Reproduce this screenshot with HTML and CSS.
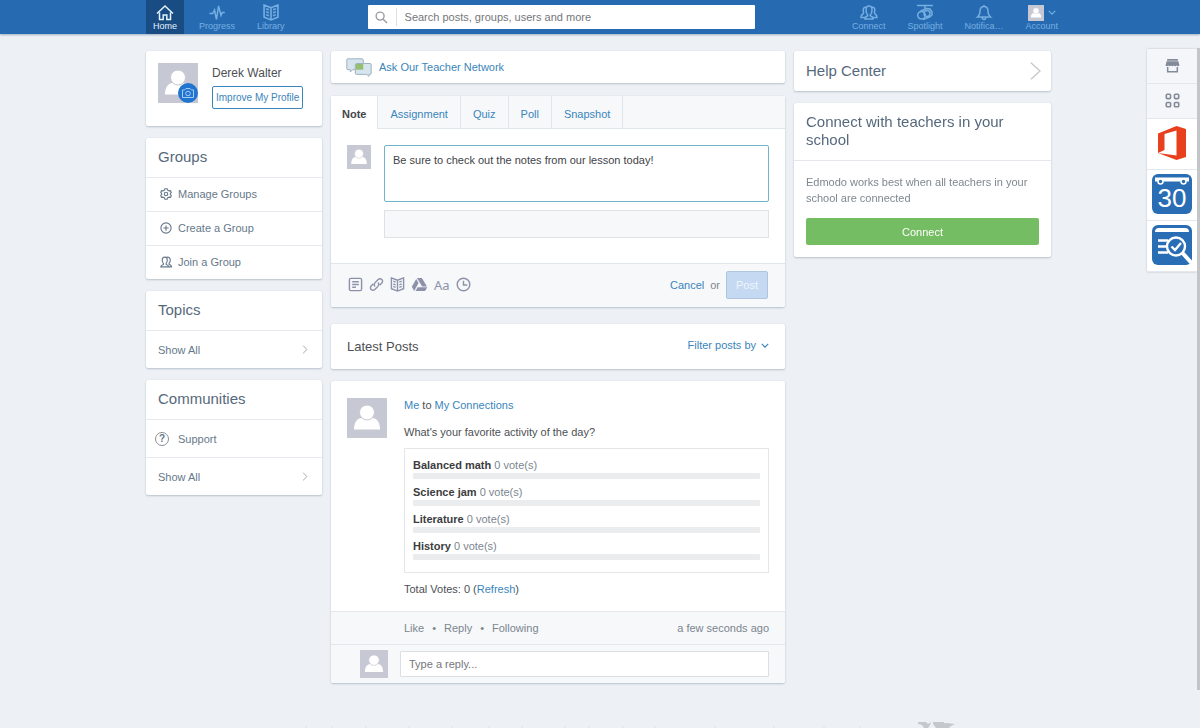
FILE: index.html
```
<!DOCTYPE html>
<html lang="en">
<head>
<meta charset="utf-8">
<title>Edmodo | Home</title>
<link rel="stylesheet" href="styles.css">
</head>
<body>
<svg class="defs" width="0" height="0" aria-hidden="true">
  <symbol id="person" viewBox="0 0 40 40"><rect width="40" height="40" fill="#c6c8d3"/><path d="M7 31.500c0-7 3-11.500 8-11.500h10c5 0 8 4.500 8 11.500z" fill="#fff"/><circle cx="20" cy="14.500" r="7.500" fill="#fff" stroke="#c6c8d3"/></symbol>
  <symbol id="book" viewBox="0 0 16 16"><path d="M8 3.500 1.500 1v11.500L8 15l6.500-2.500V1zM8 3.500V15M3.500 4.500 6 5.500M3.500 7.300 6 8.300M3.500 10 6 11M12.500 4.500 10 5.500M12.500 7.300 10 8.300M12.500 10 10 11"/></symbol>
  <symbol id="people" viewBox="0 0 18 16"><path d="M2 14.500c0-2 1.500-2.500 3.500-3.200v-1.500C4 8.500 4 7 4 5.500 4 3 5.200 1.500 7.300 1.500S10.700 3 10.700 5.500c0 1.500 0 3-1.500 4.300v1.500c2 .7 3.500 1.200 3.500 3.200zM9.500 1.800c2.800-1 5.200.4 5.200 3.700 0 1.600-.4 3.200-1.600 4.200v1.400c2 .7 3.400 1.400 3.400 3.400h-3.800"/></symbol>
  <symbol id="right" viewBox="0 0 8 14"><path d="m1 1 6 6-6 6"/></symbol>
  <symbol id="down" viewBox="0 0 10 6"><path d="m1 1 4 4 4-4"/></symbol>
</svg>

<header class="topbar">
  <div class="topbar-inner">
    <nav class="nav" aria-label="Main">
      <a class="nav-item active" href="#"><svg class="line" viewBox="0 0 18 16"><path d="m1 9 8-7.500L17 9M3.500 8v7h3.700v-4.500h3.600V15h3.700V8"/></svg><span>Home</span></a>
      <a class="nav-item" href="#"><svg class="line" viewBox="0 0 18 16"><path d="M1.500 9h3.200L6.500 5.500 8.500 15l2-13.500L13 11l1.300-3h2.500"/></svg><span>Progress</span></a>
      <a class="nav-item" href="#"><svg class="line"><use href="#book"/></svg><span>Library</span></a>
    </nav>
    <form class="search">
      <button class="search-btn" type="button" aria-label="Search"><svg class="line" viewBox="0 0 14 14"><circle cx="5.500" cy="5.500" r="4.300"/><path d="m8.500 8.500 4.500 4.500"/></svg></button>
      <input type="search" aria-label="Search" placeholder="Search posts, groups, users and more">
    </form>
    <nav class="nav nav-right" aria-label="Personal">
      <a class="nav-item" href="#"><svg class="line" viewBox="0 0 18 16"><path d="M6.500 2.500C2.500 2.500 3 6 3.600 8c.2 1-.3 1.400-1.300 2C1 10.800 1 12 1 13h4M11.500 2.500c4 0 3.500 3.500 2.900 5.500-.2 1 .3 1.400 1.300 2 1.300.8 1.300 2 1.300 3h-4M5 14.500c0-2 1-2.500 2.700-3.200v-1C6.400 9.300 6 8 6 5.500 6 3 7 1.500 9 1.500s3 1.500 3 4c0 2.500-.4 3.800-1.700 4.800v1c1.700.7 2.700 1.200 2.700 3.200z"/></svg><span>Connect</span></a>
      <a class="nav-item" href="#"><svg class="line" viewBox="0 0 18 16"><path d="M1 1h16M9 1v3M4.500 6.500 11 4l3 .5 2 3v3l-2.500 2L7 15"/><circle cx="5.500" cy="10.700" r="3.800"/><circle cx="11" cy="9" r="3"/></svg><span>Spotlight</span></a>
      <a class="nav-item" href="#"><svg class="line" viewBox="0 0 18 16"><path d="M2.500 12.500c2-1.500 2.500-3 2.500-5.500C5 3.500 6.500 2 9 2s4 1.500 4 5c0 2.500.5 4 2.500 5.500zM9 2V.5M7.300 13c0 2.700 3.400 2.700 3.400 0"/></svg><span>Notifica…</span></a>
      <a class="nav-item" href="#"><span class="account"><svg class="account-pic"><use href="#person"/></svg><svg class="line chevron-down"><use href="#down"/></svg></span><span>Account</span></a>
    </nav>
  </div>
</header>

<main class="page">
  <aside class="column">
    <section class="card profile">
      <div class="profile-pic"><svg class="pic-40"><use href="#person"/></svg>
        <svg class="camera" viewBox="0 0 20 20"><circle cx="10" cy="10" r="10" fill="#2175cf"/><path d="M4.500 7h2L8 5.500h4L13.500 7h2v7.500h-11z" fill="none" stroke="#a4cdf6"/><circle cx="10" cy="10.500" r="2.300" fill="none" stroke="#a4cdf6"/></svg></div>
      <div class="profile-info"><div class="profile-name">Derek Walter</div><button class="improve" type="button">Improve My Profile</button></div>
    </section>
    <section class="card">
      <h2 class="card-title">Groups</h2>
      <a class="group-row" href="#"><svg class="line" viewBox="0 0 16 16"><path d="M6.500 1h3l.6 1.800 2 1.100 1.900-.4 1 2.500-1.200 1.400v1.200L15 10l-1 2.500-1.900-.4-2 1.100-.6 1.800h-3l-.6-1.800-2-1.100-1.900.4L1 10l1.200-1.400V7.400L1 6l1-2.500 1.900.4 2-1.100z"/><circle cx="8" cy="8" r="2.300"/></svg>Manage Groups</a>
      <a class="group-row" href="#"><svg class="line" viewBox="0 0 16 16"><circle cx="8" cy="8" r="6.800"/><path d="M8 4.500v7M4.500 8h7"/></svg>Create a Group</a>
      <a class="group-row" href="#"><svg class="line"><use href="#people"/></svg>Join a Group</a>
    </section>
    <section class="card">
      <h2 class="card-title">Topics</h2>
      <a class="side-row" href="#">Show All<svg class="line chevron"><use href="#right"/></svg></a>
    </section>
    <section class="card">
      <h2 class="card-title">Communities</h2>
      <a class="side-row support" href="#"><span class="question" aria-hidden="true">?</span>Support</a>
      <a class="side-row" href="#">Show All<svg class="line chevron"><use href="#right"/></svg></a>
    </section>
  </aside>

  <div class="column">
    <section class="card ask">
      <svg class="ask-icon" viewBox="0 0 26 19"><path d="M2 .8h14q1.200 0 1.200 1.200v8.500q0 1.200-1.200 1.200H6.500L4.300 14v-2.300H2Q.8 11.700.8 10.500V2Q.8.800 2 .8z" fill="#d5e4ed" stroke="#9eb3c1"/><path d="M10.500 5.500H24q1.200 0 1.200 1.200v8.500q0 1.200-1.200 1.200h-1v2l-2.300-2H10.500q-1.200 0-1.200-1.200V6.700q0-1.200 1.200-1.200z" fill="#d5e4ed" stroke="#9eb3c1"/><path d="M9.800 6h7.400v5.700H9.800z" fill="#96bd70"/></svg>
      <a href="#">Ask Our Teacher Network</a>
    </section>

    <section class="card composer">
      <div class="tabs" role="tablist">
        <button class="tab selected" role="tab" aria-selected="true" type="button">Note</button>
        <button class="tab" role="tab" type="button">Assignment</button>
        <button class="tab" role="tab" type="button">Quiz</button>
        <button class="tab" role="tab" type="button">Poll</button>
        <button class="tab" role="tab" type="button">Snapshot</button>
      </div>
      <div class="composer-body">
        <svg class="pic-24"><use href="#person"/></svg>
        <div class="composer-fields">
          <textarea aria-label="Note" autofocus spellcheck="false">Be sure to check out the notes from our lesson today!</textarea>
          <input class="recipients" type="text" aria-label="Recipients">
        </div>
      </div>
      <div class="composer-footer">
        <div class="tools">
          <button type="button" aria-label="File"><svg class="line" viewBox="0 0 16 16"><rect x="1.500" y="1.500" width="13" height="13" rx="1.500"/><path d="M4.500 5h7M4.500 8h7M4.500 11h4"/></svg></button>
          <button type="button" aria-label="Link"><svg class="line" viewBox="0 0 16 16"><path d="M6.500 10.200c-1.500-1.500-1-3 0-4.200l3-3c3-3 6.800.7 4 3.600l-2 2M9.500 5.800c1.500 1.500 1 3 0 4.200l-3 3c-3 3-6.800-.7-4-3.600l2-2"/></svg></button>
          <button type="button" aria-label="Library"><svg class="line"><use href="#book"/></svg></button>
          <button type="button" aria-label="Google Drive"><svg class="drive" viewBox="0 0 18 16"><path d="M6.300 1h5.200l5.500 9h-5.200zM5.500 2 8 6.500 3.300 15 .8 10.500zM7 11h10.300L15 15H4.800z"/></svg></button>
          <button type="button" class="text-tool" aria-label="Text style">Aa</button>
          <button type="button" aria-label="Schedule"><svg class="line" viewBox="0 0 16 16"><circle cx="8" cy="8" r="6.700"/><path d="M8 4v4.500h4"/></svg></button>
        </div>
        <div class="submit"><a href="#">Cancel</a><span>or</span><button class="post-btn" type="button">Post</button></div>
      </div>
    </section>

    <section class="card latest">
      <h2>Latest Posts</h2>
      <button class="filter" type="button">Filter posts by<svg class="line chevron-down"><use href="#down"/></svg></button>
    </section>

    <article class="card post">
      <div class="post-main">
        <svg class="pic-40"><use href="#person"/></svg>
        <div class="post-content">
          <p><a href="#">Me</a> to <a href="#">My Connections</a></p>
          <p class="question-text">What's your favorite activity of the day?</p>
          <ul class="poll">
            <li><b>Balanced math</b> 0 vote(s)<div class="bar"></div></li>
            <li><b>Science jam</b> 0 vote(s)<div class="bar"></div></li>
            <li><b>Literature</b> 0 vote(s)<div class="bar"></div></li>
            <li><b>History</b> 0 vote(s)<div class="bar"></div></li>
          </ul>
          <p>Total Votes: 0 (<a href="#">Refresh</a>)</p>
        </div>
      </div>
      <div class="post-actions"><a href="#">Like</a><span>•</span><a href="#">Reply</a><span>•</span><a href="#">Following</a><time>a few seconds ago</time></div>
      <div class="reply"><svg class="pic-28"><use href="#person"/></svg><input type="text" aria-label="Reply" placeholder="Type a reply..."></div>
    </article>
  </div>

  <aside class="column">
    <a class="card help" href="#">Help Center<svg class="line help-chevron" viewBox="0 0 12 20"><path d="m1 1 10 9-10 9"/></svg></a>
    <section class="card">
      <h2 class="card-title">Connect with teachers in your school</h2>
      <div class="connect-body"><p>Edmodo works best when all teachers in your school are connected</p><button class="connect-btn" type="button">Connect</button></div>
    </section>
  </aside>
</main>

<nav class="rail" aria-label="Apps">
  <a class="rail-small" href="#" aria-label="Store"><svg viewBox="0 0 14 14"><path d="M2 1h10v1.500H2zM1.500 3h11l1 4q-1.200 1.500-2.600 0-1.300 1.500-2.600 0-1.300 1.500-2.600 0-1.300 1.500-2.600 0Q1.700 8.500.5 7z" fill="#838a99"/><path d="M2.500 8.500v4.300h9V8.500" fill="none" stroke="#838a99" stroke-width="1.400"/></svg></a>
  <a class="rail-small" href="#" aria-label="All apps"><svg viewBox="0 0 14 14" fill="none" stroke="#838a99" stroke-width="1.500"><rect x="1.200" y="1.200" width="4" height="4" rx="1"/><rect x="8.800" y="1.200" width="4" height="4" rx="1"/><rect x="1.200" y="8.800" width="4" height="4" rx="1"/><rect x="8.800" y="8.800" width="4" height="4" rx="1"/></svg></a>
  <a class="rail-app" href="#" aria-label="Office"><svg viewBox="0 0 42 42"><path d="M7 11.500 25.500 4 35 7v28l-9.500 3L7 31l18.500 2.500V8.500L13.500 12v16L7 31z" fill="#e8401c"/></svg></a>
  <a class="rail-app" href="#" aria-label="Planner"><svg viewBox="0 0 42 42"><rect x="1" y="1" width="40" height="40" rx="6" fill="#296eb4"/><path d="M4 4.500h34v4H4z" fill="#fff"/><circle cx="9.500" cy="8.500" r="2.500" fill="#296eb4" stroke="#fff" stroke-width="1.500"/><circle cx="32.500" cy="8.500" r="2.500" fill="#296eb4" stroke="#fff" stroke-width="1.500"/><text x="21" y="34" text-anchor="middle" class="planner-day">30</text></svg></a>
  <a class="rail-app" href="#" aria-label="Snapshot"><svg viewBox="0 0 42 42"><rect x="1" y="1" width="40" height="40" rx="6" fill="#296eb4"/><path d="M4 8q0-4 4-4h26q4 0 4 4z" fill="#fff"/><g fill="none" stroke="#fff" stroke-width="2.400"><path d="M7 16.500h10M7 22.500h8M7 28.500h10"/><circle cx="25" cy="22.500" r="9"/><path d="m20.500 22.500 3.500 3.500 6-7"/><path d="m31.500 29 9 10" stroke-width="4"/></g></svg></a>
</nav>
<div class="scroll-thumb"></div>

<footer class="site-footer">
  <svg viewBox="0 0 655 12" aria-hidden="true"><path d="M2 10v2M28 10v2M62 10v2M105 10v2M148 10v2M185 10v2M218 10v2M261 10v2M285 10v2M319 10v2M351 10v2M411 10v2M470 10v2M520 10v2M556 10v2" stroke="#dbe1e6"/><path d="M614 6h8l2 2 3-2-1 3-2 3h-4l-2-3-4-1zM629 6h11v2h-3l-2 4h-3v-3l-3-1zM629 8l14-1 8 1-4 2-2 2h-13z" fill="#c3c9cd"/></svg>
</footer>
</body>
</html>
```
FILE: styles.css
```
* { box-sizing: border-box; }
html { background: #edf1f5; }
body {
  margin: 0;
  min-height: 100vh;
  padding-right: 3px;
  overflow: hidden;
  position: relative;
  display: flex;
  flex-direction: column;
  font: 11px/14px "Liberation Sans", Arial, sans-serif;
  color: #4c4f54;
}
a { color: #3a85ba; text-decoration: none; }
h2, p, ul { margin: 0; padding: 0; font-weight: normal; }
button, input, textarea { font: inherit; }
button { border: 0; background: none; padding: 0; color: inherit; }
.line { fill: none; stroke: currentColor; stroke-width: 1.5; }
.defs { position: absolute; }

.topbar {
  background: #266bb2;
  margin-right: -3px;
  padding-right: 3px;
  box-shadow: 0 1px 2px #9dadc0;
}
.topbar-inner {
  max-width: 905px;
  height: 34px;
  margin: 0 auto;
  display: flex;
  align-items: stretch;
}
.nav { display: flex; gap: 8px; }
.nav-right { margin-left: auto; margin-right: -14px; }
.nav-item {
  display: flex;
  flex-direction: column;
  align-items: center;
  padding: 4px 7px 0;
  font-size: 9px;
  line-height: 10px;
  color: #76aee1;
}
.nav-item > svg { width: 18px; height: 17px; }
.nav-item.active { background: #184c83; color: #e4f2ff; }
.account { display: flex; align-items: center; gap: 4px; height: 17px; }
.account-pic { width: 16px; height: 16px; }
.chevron-down { width: 8px; height: 5px; }
.search {
  flex: 0 1 387px;
  margin: 5px 0 5px 76px;
  display: flex;
  align-items: center;
  background: #fff;
  border-radius: 1px;
}
.search-btn { width: 29px; height: 18px; border-right: 1px solid #dde1e5; color: #9a9da3; }
.search-btn svg { width: 13px; height: 13px; vertical-align: middle; }
.search input { flex: 1; min-width: 0; border: 0; outline: 0; background: none; padding: 0 8px; }
::placeholder { color: #75777b; opacity: 1; }

.page {
  width: 100%;
  max-width: 905px;
  margin: 17px auto 0;
  display: grid;
  grid-template-columns: 176px minmax(0, 1fr) 257px;
  gap: 9px;
  align-items: start;
}
.column { display: flex; flex-direction: column; gap: 12px; }
.card {
  background: #fff;
  border-radius: 2px;
  box-shadow: 0 1px 2px #b9c2cc, 0 0 1px #ccd4dc;
}
.card-title { padding: 10px 12px 11px; font-size: 15px; line-height: 18px; color: #56697c; }
.pic-40 { width: 40px; height: 40px; flex: none; }
.pic-28 { width: 28px; height: 28px; flex: none; }
.pic-24 { width: 24px; height: 24px; flex: none; }

.profile { display: flex; gap: 14px; padding: 12px 12px 17px; }
.profile-pic { position: relative; height: 45px; }
.camera { position: absolute; right: 0; top: 20px; width: 20px; height: 20px; }
.profile-name { font-size: 12px; line-height: 20px; margin-bottom: 3px; }
.improve {
  height: 23px;
  padding: 0 3px;
  border: 1px solid #3a85ba;
  border-radius: 2px;
  font-size: 10px;
  white-space: nowrap;
  color: #3a85ba;
}
.group-row, .side-row { display: flex; align-items: center; border-top: 1px solid #e6e9ed; color: #66788a; }
.group-row { height: 34px; padding: 0 13px 2px; gap: 5px; }
.group-row svg { width: 14px; height: 12px; }
.side-row { height: 38px; padding: 0 14px 0 12px; }
.chevron { width: 6px; height: 9px; margin-left: auto; color: #a0a6ad; }
.support { gap: 9px; padding-left: 9px; }
.question {
  width: 14px;
  height: 14px;
  border: 1px solid #8b8f94;
  border-radius: 50%;
  line-height: 12px;
  text-align: center;
  font-weight: bold;
  font-size: 10px;
}

.ask { display: flex; align-items: center; gap: 7px; height: 32px; padding: 0 15px; }
.ask-icon { width: 26px; height: 19px; }
.composer { margin-bottom: 5px; margin-top: 1px; }
.tabs { display: flex; background: #f6f8fa; border-bottom: 1px solid #e1e6eb; }
.tab { height: 32px; padding: 3px 12px 0; border-right: 1px solid #e1e6eb; color: #3a85ba; }
.tab.selected { height: 33px; padding: 2px 11px 0; background: #fff; margin-bottom: -1px; color: #44464b; font-weight: bold; }
.composer-body { display: flex; gap: 13px; padding: 16px 16px 25px; }
.composer-fields { flex: 1; display: flex; flex-direction: column; gap: 8px; }
textarea {
  display: block;
  width: 100%;
  height: 57px;
  padding: 7px 8px;
  border: 1px solid #6db5c9;
  border-radius: 2px;
  outline: 0;
  resize: none;
  color: #414347;
}
.recipients { height: 28px; background: #f6f8fa; border: 1px solid #dde2e7; border-radius: 0; }
.composer-footer {
  display: flex;
  align-items: center;
  justify-content: space-between;
  height: 44px;
  padding: 0 17px 2px;
  background: #f6f8fa;
  border-top: 1px solid #e1e6eb;
  border-radius: 0 0 2px 2px;
}
.tools { display: flex; align-items: center; gap: 6px; color: #8d92aa; }
.tools button { display: flex; }
.tools svg { width: 15px; height: 15px; }
.tools .drive { width: 17px; fill: currentColor; }
.tools .text-tool { font: 13px/14px "Noto Sans", sans-serif; }
.submit { display: flex; align-items: center; gap: 6px; color: #7f868d; }
.post-btn { height: 28px; padding: 0 9px; background: #c5daf2; border: 1px solid #aec4df; border-radius: 2px; color: #eef5fc; }

.latest { display: flex; align-items: center; justify-content: space-between; height: 45px; padding: 0 16px; }
.latest h2 { font-size: 13px; line-height: 16px; }
.filter { display: flex; align-items: center; gap: 5px; padding-bottom: 3px; color: #3a85ba; }

.post-main { display: flex; gap: 17px; padding: 17px 16px 15px; }
.post-content { flex: 1; display: flex; flex-direction: column; }
.question-text { margin: 13px 0 9px; }
.poll { list-style: none; border: 1px solid #e4e7ea; padding: 9px 8px 6px; margin-bottom: 9px; color: #7c858f; }
.poll li { margin-bottom: 6px; }
.poll b { color: #3c3d40; }
.bar { height: 6px; margin-top: 1px; background: #ebeced; border-radius: 1px; }
.post-actions, .reply { display: flex; align-items: center; background: #f6f8fa; border-top: 1px solid #e4e8ec; }
.post-actions { gap: 8px; height: 33px; padding: 0 16px 0 73px; color: #7c858f; }
.post-actions a { color: inherit; }
.post-actions time { margin-left: auto; }
.reply { gap: 12px; height: 39px; padding: 0 16px 0 29px; border-radius: 0 0 2px 2px; }
.reply input { flex: 1; min-width: 0; height: 26px; padding: 0 8px; border: 1px solid #d9dfe5; border-radius: 1px; background: #fff; }

.help { display: flex; align-items: center; justify-content: space-between; height: 40px; padding: 0 10px 0 12px; font-size: 15px; color: #56697c; }
.help-chevron { width: 11px; height: 20px; color: #c4c8cc; }
.connect-body { padding: 13px 12px 12px; border-top: 1px solid #e4e8ec; color: #7e8790; }
.connect-body p { line-height: 16px; margin-bottom: 12px; }
.connect-btn { width: 100%; height: 27px; border-radius: 2px; background: #74bd62; color: #fff; }

.rail { position: absolute; top: 49px; right: 3px; width: 50px; background: #fff; box-shadow: 0 0 2px #b9c2cc; }
.rail a { display: flex; align-items: center; justify-content: center; border-bottom: 1px solid #e4e8ec; }
.rail .rail-small { height: 35px; padding-bottom: 2px; background: #f4f6f9; }
.rail-small svg { width: 15px; height: 15px; }
.rail .rail-app { height: 51px; padding-bottom: 2px; }
.rail-app svg { width: 42px; height: 42px; }
.planner-day { font: 26px "Liberation Sans", Arial, sans-serif; fill: #fff; }
.scroll-thumb { position: absolute; top: 48px; bottom: 38px; right: 0; width: 3px; background: #c3c5c8; }

.site-footer { width: 100%; max-width: 905px; height: 12px; margin: auto auto 0; padding-left: 158px; }
.site-footer svg { display: block; width: 655px; height: 12px; }
```
